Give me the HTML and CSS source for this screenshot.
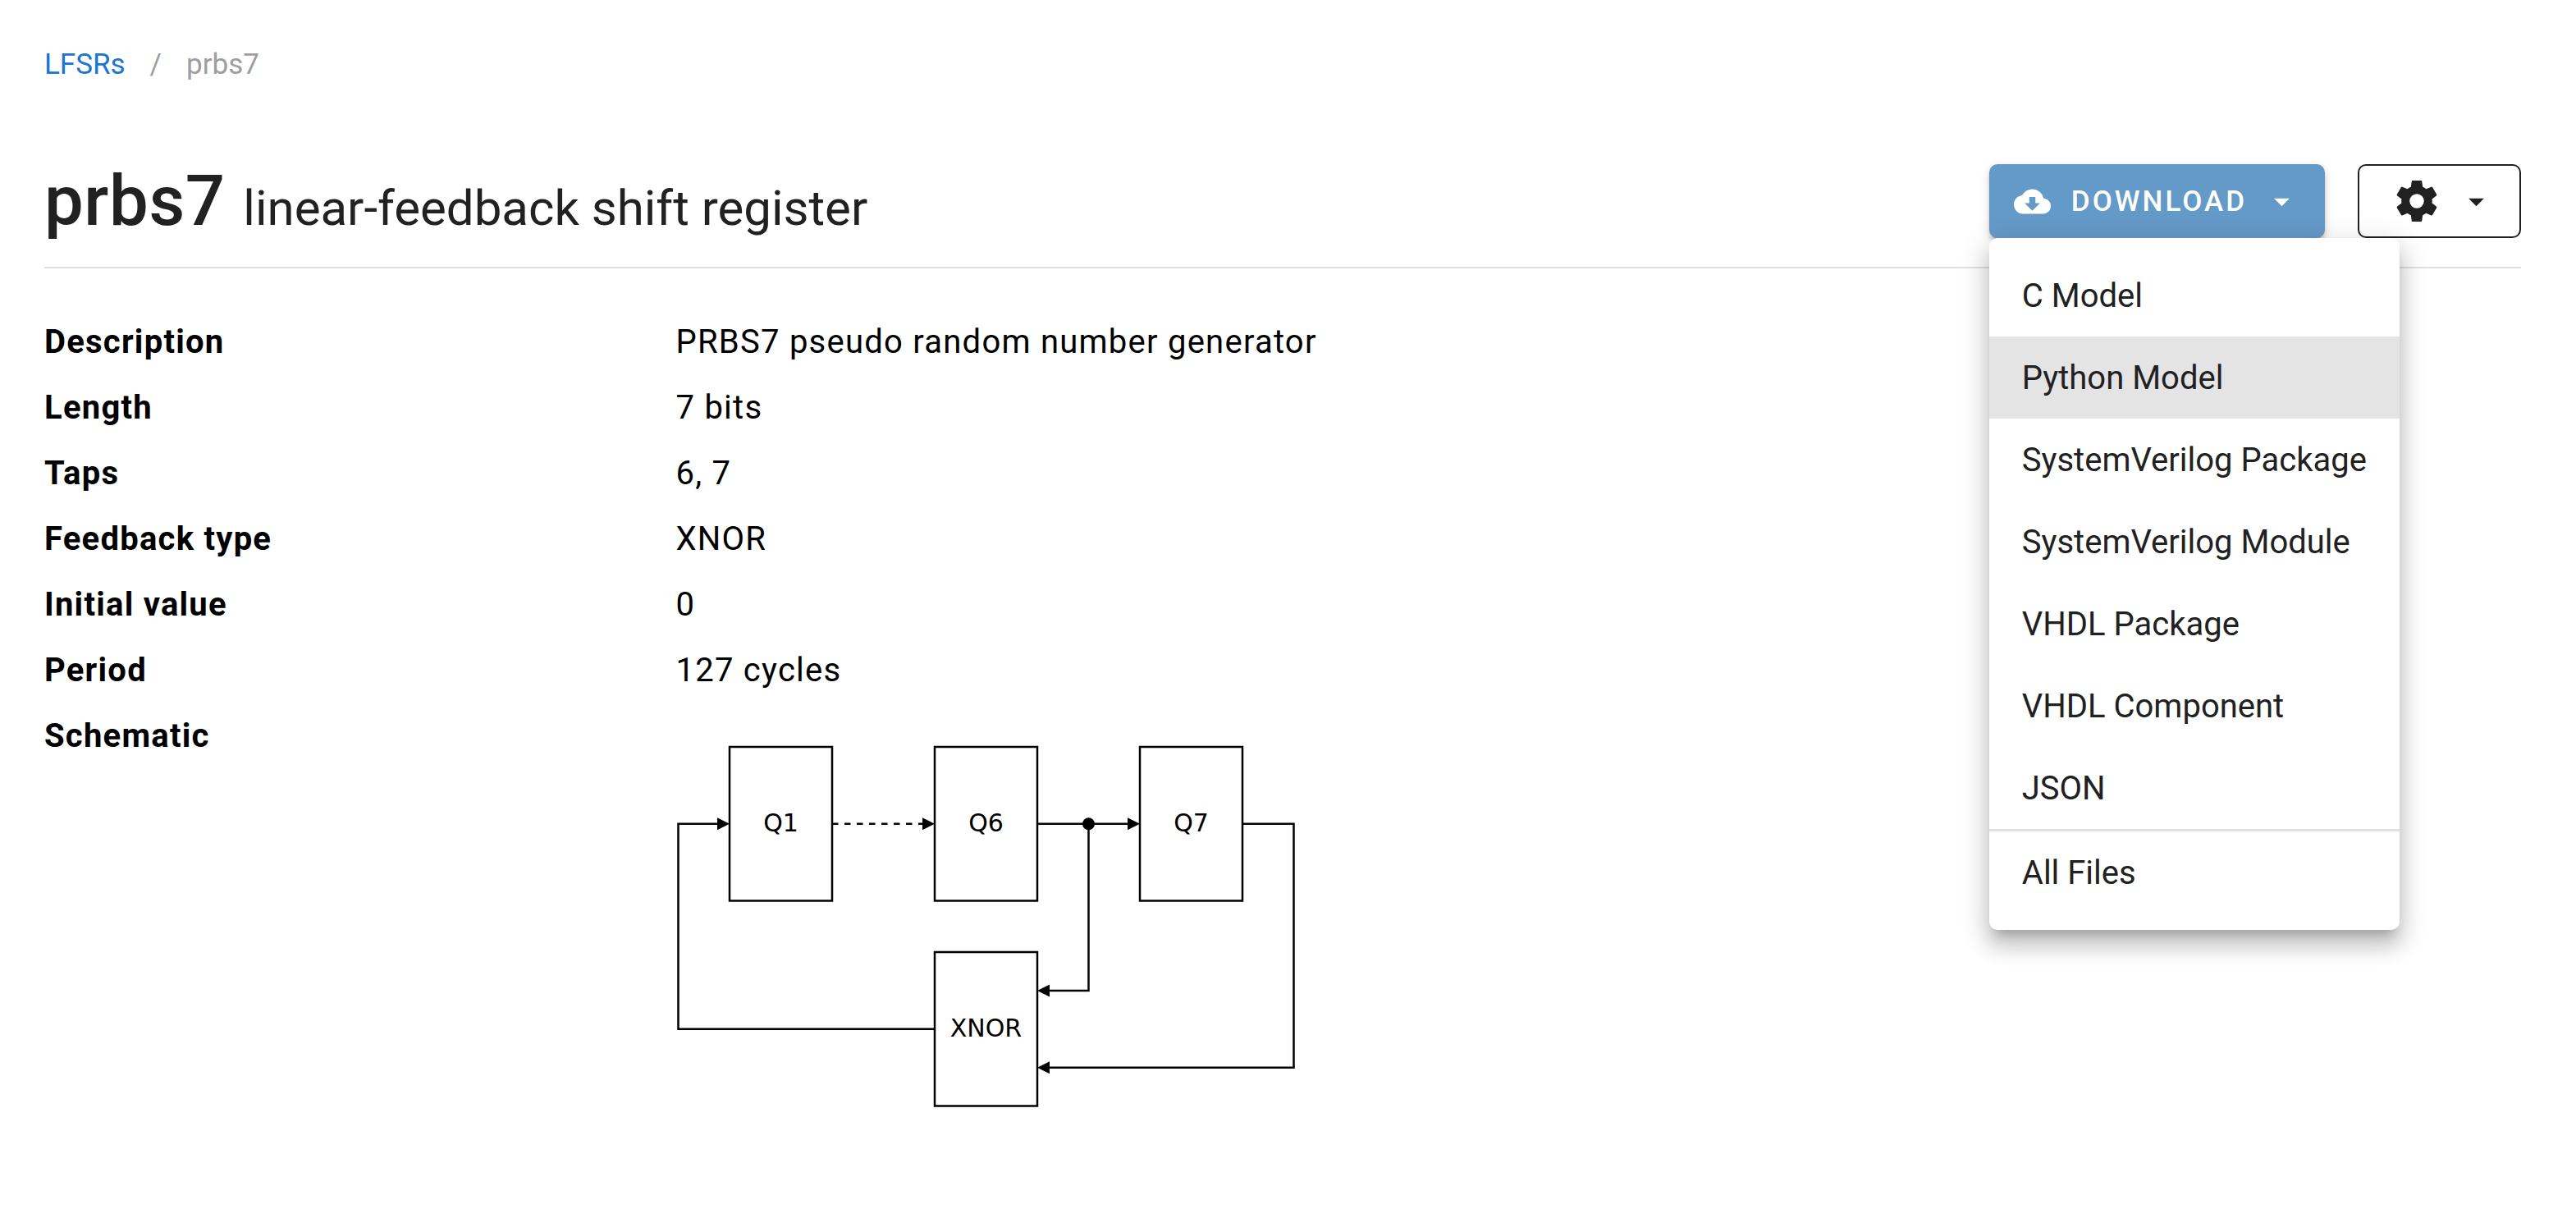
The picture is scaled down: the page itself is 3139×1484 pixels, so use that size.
FILE: index.html
```html
<!DOCTYPE html>
<html lang="en">
<head>
  <meta charset="utf-8">
  <title>prbs7 linear-feedback shift register</title>
  <link rel="stylesheet" href="styles.css">
</head>
<body>
  <nav class="breadcrumbs" aria-label="Breadcrumb">
    <a class="breadcrumb-link" href="#">LFSRs</a>
    <span class="breadcrumb-divider">/</span>
    <span class="breadcrumb-current" aria-current="page">prbs7</span>
  </nav>

  <main>
    <header class="page-header">
      <h1 class="title">prbs7 <small class="subtitle">linear-feedback shift register</small></h1>
      <div class="actions">
        <div class="dropdown">
          <button class="btn btn-download" type="button" aria-haspopup="menu" aria-expanded="true">
            <svg class="icon icon-lead" viewBox="0 0 24 24" aria-hidden="true"><path d="M17,13L12,18L7,13H10V9H14V13M19.35,10.03C18.67,6.59 15.64,4 12,4C9.11,4 6.6,5.64 5.35,8.03C2.34,8.36 0,10.9 0,14A6,6 0 0,0 6,20H19A5,5 0 0,0 24,15C24,12.36 21.95,10.22 19.35,10.03Z"/></svg>
            <span>DOWNLOAD</span>
            <svg class="icon icon-caret" viewBox="0 0 24 24" aria-hidden="true"><path d="M7,10L12,15L17,10H7Z"/></svg>
          </button>
          <div class="menu" role="menu">
            <button class="menu-item" type="button" role="menuitem">C Model</button>
            <button class="menu-item is-active" type="button" role="menuitem">Python Model</button>
            <button class="menu-item" type="button" role="menuitem">SystemVerilog Package</button>
            <button class="menu-item" type="button" role="menuitem">SystemVerilog Module</button>
            <button class="menu-item" type="button" role="menuitem">VHDL Package</button>
            <button class="menu-item" type="button" role="menuitem">VHDL Component</button>
            <button class="menu-item" type="button" role="menuitem">JSON</button>
            <hr class="menu-divider">
            <button class="menu-item" type="button" role="menuitem">All Files</button>
          </div>
        </div>
        <button class="btn btn-settings" type="button" aria-label="Settings" aria-haspopup="menu">
          <svg class="icon icon-cog" viewBox="0 0 24 24" aria-hidden="true"><path d="M12,15.5A3.5,3.5 0 0,1 8.5,12A3.5,3.5 0 0,1 12,8.5A3.5,3.5 0 0,1 15.5,12A3.5,3.5 0 0,1 12,15.5M19.43,12.97C19.47,12.65 19.5,12.33 19.5,12C19.5,11.67 19.47,11.34 19.43,11L21.54,9.37C21.73,9.22 21.78,8.95 21.66,8.73L19.66,5.27C19.54,5.05 19.27,4.96 19.05,5.05L16.56,6.05C16.04,5.66 15.5,5.32 14.87,5.07L14.5,2.42C14.46,2.18 14.25,2 14,2H10C9.75,2 9.54,2.18 9.5,2.42L9.13,5.07C8.5,5.32 7.96,5.66 7.44,6.05L4.95,5.05C4.73,4.96 4.46,5.05 4.34,5.27L2.34,8.73C2.21,8.95 2.27,9.22 2.46,9.37L4.57,11C4.53,11.34 4.5,11.67 4.5,12C4.5,12.33 4.53,12.65 4.57,12.97L2.46,14.63C2.27,14.78 2.21,15.05 2.34,15.27L4.34,18.73C4.46,18.95 4.73,19.03 4.95,18.95L7.44,17.94C7.96,18.34 8.5,18.68 9.13,18.93L9.5,21.58C9.54,21.82 9.75,22 10,22H14C14.25,22 14.46,21.82 14.5,21.58L14.87,18.93C15.5,18.67 16.04,18.34 16.56,17.94L19.05,18.95C19.27,19.03 19.54,18.95 19.66,18.73L21.66,15.27C21.78,15.05 21.73,14.78 21.54,14.63L19.43,12.97Z"/></svg>
          <svg class="icon icon-caret" viewBox="0 0 24 24" aria-hidden="true"><path d="M7,10L12,15L17,10H7Z"/></svg>
        </button>
      </div>
    </header>

    <dl class="details">
      <dt>Description</dt>
      <dd>PRBS7 pseudo random number generator</dd>
      <dt>Length</dt>
      <dd>7 bits</dd>
      <dt>Taps</dt>
      <dd>6, 7</dd>
      <dt>Feedback type</dt>
      <dd>XNOR</dd>
      <dt>Initial value</dt>
      <dd>0</dd>
      <dt>Period</dt>
      <dd>127 cycles</dd>
      <dt>Schematic</dt>
      <dd>
        <svg class="schematic" viewBox="1 0 304 180" role="img" aria-label="Shift register schematic">
          <!-- registers and feedback gate -->
          <g class="block">
            <rect x="27" y="2" width="50" height="75"/>
            <rect x="127" y="2" width="50" height="75"/>
            <rect x="227" y="2" width="50" height="75"/>
            <rect x="127" y="102" width="50" height="75"/>
          </g>
          <!-- wires -->
          <g class="wire">
            <path d="M127,139.5H2V39.5H22"/>
            <path class="wire-dashed" d="M77,39.5H123"/>
            <path d="M177,39.5H222"/>
            <path d="M202,39.5V120.75H182"/>
            <path d="M277,39.5H302V158.25H182"/>
          </g>
          <!-- arrowheads and junction -->
          <path d="M21,36.5L27,39.5L21,42.5Z"/>
          <path d="M121,36.5L127,39.5L121,42.5Z"/>
          <path d="M221,36.5L227,39.5L221,42.5Z"/>
          <path d="M183,117.75L177,120.75L183,123.75Z"/>
          <path d="M183,155.25L177,158.25L183,161.25Z"/>
          <circle cx="202" cy="39.5" r="3"/>
          <g class="label">
            <text x="52" y="43">Q1</text>
            <text x="152" y="43">Q6</text>
            <text x="252" y="43">Q7</text>
            <text x="152" y="143">XNOR</text>
          </g>
        </svg>
      </dd>
    </dl>
  </main>
</body>
</html>
```
FILE: styles.css
```css
* {
  box-sizing: border-box;
}

body {
  margin: 0;
  padding: 54px 67px 40px 54px;
  background: #fff;
  color: #000;
  font-family: Roboto, "Liberation Sans", sans-serif;
  font-size: 40px;
  line-height: 60px;
}

button {
  font-family: inherit;
  cursor: pointer;
}

.breadcrumbs {
  display: flex;
  gap: 30px;
  font-size: 35px;
  line-height: 50px;
  color: #9e9e9e;
}

.breadcrumb-link {
  color: #1976d2;
  text-decoration: none;
}

.page-header {
  display: flex;
  align-items: center;
  justify-content: space-between;
  margin-top: 96px;
  padding-bottom: 35px;
  border-bottom: 2px solid #e0e0e0;
}

.title {
  margin: 0;
  color: #212121;
  font-size: 85px;
  font-weight: 500;
  letter-spacing: 0.007em;
  line-height: 90px;
}

.subtitle {
  font-size: 60px;
  font-weight: 400;
  letter-spacing: normal;
  line-height: 60px;
}

.actions {
  display: flex;
  gap: 40px;
}

.dropdown {
  position: relative;
}

.btn {
  display: flex;
  align-items: center;
  height: 90px;
  border: 0;
  border-radius: 10px;
  font-size: 35px;
  font-weight: 500;
  letter-spacing: 3px;
}

.btn-download {
  padding: 0 30px;
  background: #649ac8;
  color: #fff;
  box-shadow: 0 8px 3px -5px rgba(0, 0, 0, 0.2), 0 5px 5px 0 rgba(0, 0, 0, 0.14), 0 3px 13px 0 rgba(0, 0, 0, 0.12);
}

.btn-settings {
  padding: 0 30px 0 40px;
  border: 2px solid #212121;
  background: #fff;
  color: #212121;
}

.icon {
  flex: none;
  width: 45px;
  height: 45px;
  fill: currentColor;
}

.icon-lead {
  margin-right: 25px;
}

.icon-caret {
  margin-left: 20px;
}

.icon-cog {
  width: 60px;
  height: 60px;
}

.menu {
  position: absolute;
  z-index: 1;
  top: 100%;
  left: 0;
  width: max-content;
  padding: 20px 0;
  border-radius: 10px;
  background: #fff;
  box-shadow: 0 13px 13px -8px rgba(0, 0, 0, 0.2), 0 20px 25px 3px rgba(0, 0, 0, 0.14), 0 8px 35px 5px rgba(0, 0, 0, 0.12);
}

.menu-item {
  display: block;
  width: 100%;
  height: 100px;
  padding: 0 40px;
  border: 0;
  background: none;
  color: #212121;
  font-size: 40px;
  text-align: left;
}

.menu-item.is-active {
  background: #e4e4e4;
}

.menu-divider {
  height: 3px;
  margin: 0;
  border: 0;
  background: #e0e0e0;
}

.details {
  display: grid;
  grid-template-columns: 1fr 3fr;
  column-gap: 20px;
  margin: 50px 0 0;
  letter-spacing: 0.031em;
}

.details dt,
.details dd {
  margin: 0;
  padding: 10px 0;
}

.details dt {
  font-weight: 700;
}

.schematic {
  display: block;
  width: 760px;
  height: 450px;
  margin-top: 38px;
  letter-spacing: normal;
}

.block {
  fill: #fff;
  stroke: #000;
}

.wire {
  fill: none;
  stroke: #000;
}

.wire-dashed {
  stroke-dasharray: 3 3;
}

.label {
  font-family: "DejaVu Sans", sans-serif;
  font-size: 12px;
  text-anchor: middle;
}
```
